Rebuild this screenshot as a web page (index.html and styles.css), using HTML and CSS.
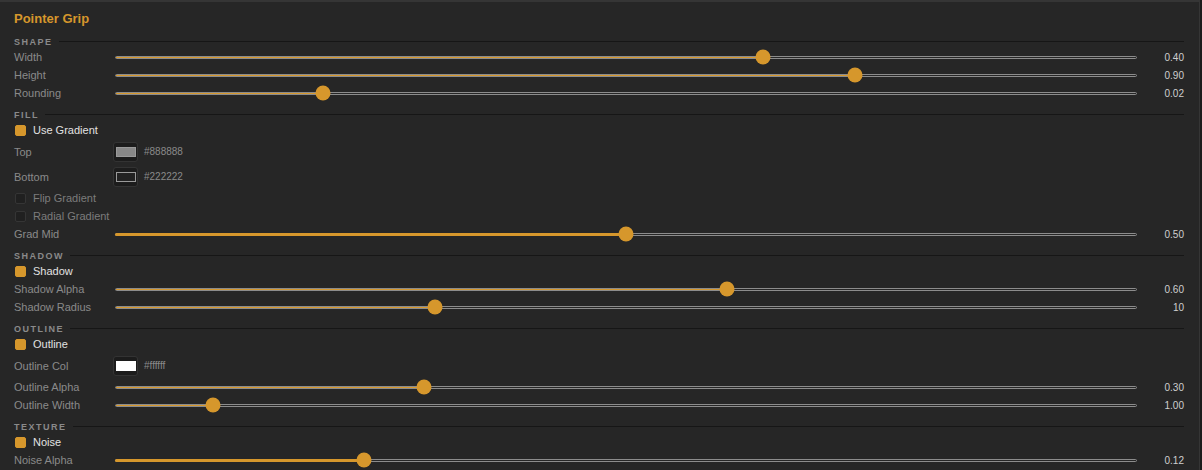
FILE: index.html
```html
<!DOCTYPE html>
<html>
<head>
<meta charset="utf-8">
<link rel="stylesheet" href="styles.css">
</head>
<body>
<div class="panel">
  <div class="title">Pointer Grip</div>

  <div class="section">SHAPE</div>
  <div class="row"><span class="label">Width</span><div class="slider"><div class="track"><div class="fill" style="width:63.4%"></div></div><div class="thumb" style="left:63.4%"></div></div><span class="value">0.40</span></div>
  <div class="row"><span class="label">Height</span><div class="slider"><div class="track"><div class="fill" style="width:72.4%"></div></div><div class="thumb" style="left:72.4%"></div></div><span class="value">0.90</span></div>
  <div class="row"><span class="label">Rounding</span><div class="slider"><div class="track"><div class="fill" style="width:20.35%"></div></div><div class="thumb" style="left:20.35%"></div></div><span class="value">0.02</span></div>

  <div class="section">FILL</div>
  <div class="row"><span class="check on"></span><span class="check-label">Use Gradient</span></div>
  <div class="row color-row"><span class="label short">Top</span><span class="swatch"><span class="chip chip-888"></span></span><span class="hex">#888888</span></div>
  <div class="row color-row"><span class="label short">Bottom</span><span class="swatch"><span class="chip chip-222"></span></span><span class="hex">#222222</span></div>
  <div class="row"><span class="check"></span><span class="check-label dim">Flip Gradient</span></div>
  <div class="row"><span class="check"></span><span class="check-label dim">Radial Gradient</span></div>
  <div class="row"><span class="label">Grad Mid</span><div class="slider"><div class="track solid"><div class="fill" style="width:50%"></div></div><div class="thumb" style="left:50%"></div></div><span class="value">0.50</span></div>

  <div class="section">SHADOW</div>
  <div class="row"><span class="check on"></span><span class="check-label">Shadow</span></div>
  <div class="row"><span class="label">Shadow Alpha</span><div class="slider"><div class="track"><div class="fill" style="width:59.9%"></div></div><div class="thumb" style="left:59.9%"></div></div><span class="value">0.60</span></div>
  <div class="row"><span class="label">Shadow Radius</span><div class="slider"><div class="track"><div class="fill" style="width:31.3%"></div></div><div class="thumb" style="left:31.3%"></div></div><span class="value">10</span></div>

  <div class="section">OUTLINE</div>
  <div class="row"><span class="check on"></span><span class="check-label">Outline</span></div>
  <div class="row color-row"><span class="label short">Outline Col</span><span class="swatch"><span class="chip chip-fff"></span></span><span class="hex">#ffffff</span></div>
  <div class="row"><span class="label">Outline Alpha</span><div class="slider"><div class="track"><div class="fill" style="width:30.2%"></div></div><div class="thumb" style="left:30.2%"></div></div><span class="value">0.30</span></div>
  <div class="row"><span class="label">Outline Width</span><div class="slider"><div class="track"><div class="fill" style="width:9.6%"></div></div><div class="thumb" style="left:9.6%"></div></div><span class="value">1.00</span></div>

  <div class="section">TEXTURE</div>
  <div class="row"><span class="check on"></span><span class="check-label">Noise</span></div>
  <div class="row"><span class="label">Noise Alpha</span><div class="slider"><div class="track solid"><div class="fill" style="width:24.4%"></div></div><div class="thumb" style="left:24.4%"></div></div><span class="value">0.12</span></div>
</div>
</body>
</html>
```

FILE: styles.css
```css
* { box-sizing: border-box; }
html, body { margin: 0; padding: 0; }
body {
  background: #1d1d1d;
  font-family: "Liberation Sans", Arial, Helvetica, sans-serif;
  width: 1202px;
  height: 470px;
  overflow: hidden;
}
.panel {
  width: 1200px;
  height: 470px;
  background: #262626;
  border-top: 2px solid #353535;
  border-right: 1px solid #353535;
  padding: 7px 15px 0 14px;
  overflow: hidden;
}
.title {
  height: 20px;
  line-height: 20px;
  font-size: 13px;
  font-weight: bold;
  color: #d6972c;
}
.section {
  margin-top: 6px;
  height: 13px;
  display: flex;
  align-items: center;
  font-size: 9px;
  font-weight: bold;
  letter-spacing: 1.5px;
  color: #8a8a8a;
}
.section::after {
  content: "";
  flex: 1;
  height: 1px;
  background: #161616;
  margin-left: 6px;
}
.row {
  height: 18px;
  display: flex;
  align-items: center;
}
.color-row { height: 25px; }
.label {
  width: 101px;
  flex: none;
  font-size: 11px;
  color: #8a8a8a;
  white-space: nowrap;
}
.label.short { width: 99px; }
.slider {
  flex: 1;
  height: 16px;
  position: relative;
  display: flex;
  align-items: center;
}
.track {
  width: 100%;
  height: 3px;
  border: 1px solid #8c8c8c;
  border-radius: 2px;
  position: relative;
}
.track .fill {
  height: 100%;
  background: #d6972c;
}
.track.solid .fill {
  position: absolute;
  left: -1px;
  top: -1px;
  height: 3px;
  border-radius: 2px 0 0 2px;
}
.thumb {
  position: absolute;
  top: 50%;
  width: 15px;
  height: 15px;
  border-radius: 50%;
  background: #d6972c;
  transform: translate(-50%, -50%);
}
.value {
  width: 47px;
  flex: none;
  text-align: right;
  font-size: 10px;
  color: #cfcfcf;
}
.check {
  width: 11px;
  height: 11px;
  flex: none;
  margin-left: 1px;
  margin-right: 7px;
  border-radius: 2px;
  background: #202020;
  border: 1px solid #353535;
}
.check.on {
  background: #d6972c;
  border-color: #d6972c;
}
.check-label {
  font-size: 11px;
  color: #e2e2e2;
}
.check-label.dim { color: #7c7c7c; }
.swatch {
  width: 25px;
  height: 20px;
  flex: none;
  border: 1px solid #333;
  border-radius: 3px;
  background: #1c1c1c;
  display: flex;
  align-items: center;
  justify-content: center;
}
.chip {
  width: 20px;
  height: 10px;
  border: 1px solid #9a9a9a;
}
.chip-888 { background: #888888; }
.chip-222 { background: #222222; }
.chip-fff { background: #ffffff; border-color: #ffffff; }
.hex {
  margin-left: 6px;
  font-size: 10px;
  color: #8a8a8a;
}
```
